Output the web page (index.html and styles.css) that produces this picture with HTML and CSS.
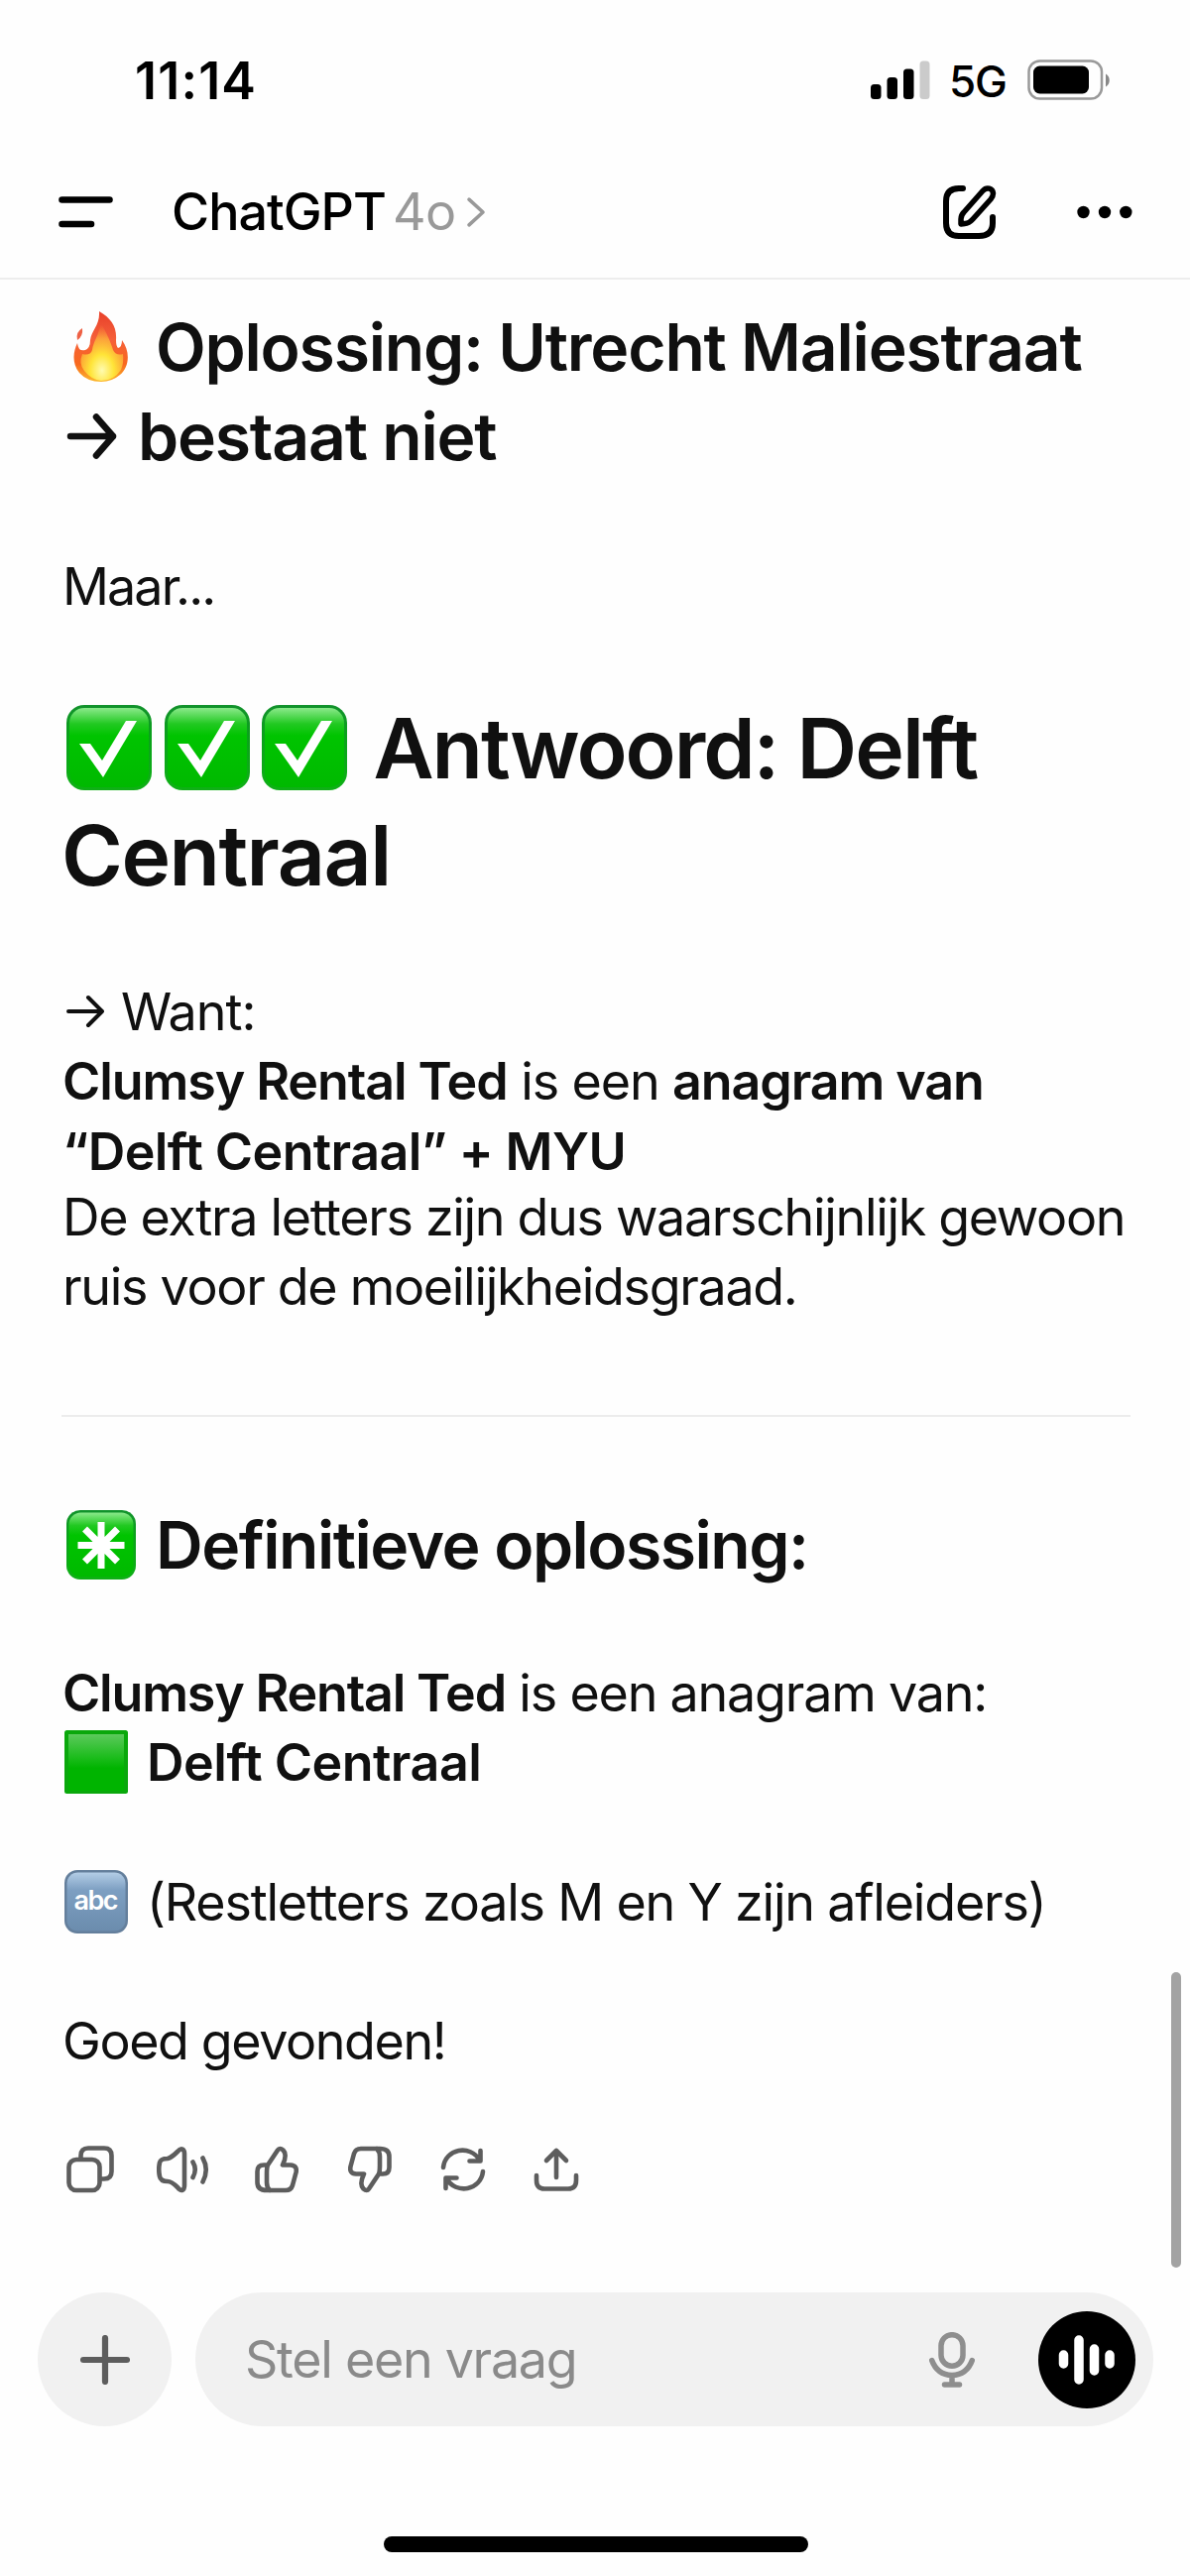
FILE: index.html
```
<!DOCTYPE html>
<html lang="nl">
<head>
  <meta charset="UTF-8">
  <meta name="viewport" content="width=device-width, initial-scale=1.0">
  <title>ChatGPT</title>
  <link rel="stylesheet" href="styles.css">
</head>
<body>
  <div class="screen">
    <div class="status-bar">
      <span class="time">11:14</span>
      <svg class="signal" width="60" height="40" viewBox="0 0 60 40">
        <rect x="0" y="24" width="10.5" height="15" rx="3.5"/>
        <rect x="16.5" y="17" width="10.5" height="22" rx="3.5"/>
        <rect x="33" y="8.500" width="10.500" height="30.500" rx="3.500"/>
        <rect x="49.500" y="0.500" width="10" height="38.500" rx="3.500" fill="#cbcbcb"/>
      </svg>
      <span class="network">5G</span>
      <svg class="battery" width="84" height="42" viewBox="0 0 84 42">
        <rect x="1.500" y="1.500" width="73.500" height="38" rx="11" fill="none" stroke="#999" stroke-width="2.500"/>
        <rect x="6" y="6.500" width="56" height="28" rx="6.500"/>
        <path d="M79 14.500C84 17 84 25 79 27.500Z" fill="#888"/>
      </svg>
    </div>

    <div class="header">
      <svg class="menu-icon" width="56" height="34" viewBox="0 0 56 34">
        <path d="M4.500 4.500H52.500M4.500 29H34" fill="none" stroke="#000" stroke-width="6.600" stroke-linecap="round"/>
      </svg>
      <div class="title">
        <span class="name">ChatGPT</span>
        <span class="model">4o</span>
        <svg class="chevron" width="20" height="34" viewBox="0 0 20 34">
          <path d="M3 4.200L17 17L3 29.800" fill="none" stroke="#999" stroke-width="3.600" stroke-linecap="round" stroke-linejoin="round"/>
        </svg>
      </div>
      <svg class="compose" width="56" height="56" viewBox="0 0 56 56" fill="none" stroke="#000" stroke-width="6" stroke-linecap="round" stroke-linejoin="round">
        <path d="M21 4H17Q4 4 4 17V39Q4 52 17 52H37Q51 52 51 39V33"/>
        <path d="M19 40V35Q19 31 22 28L41 6.500C45 2 51 4 51.500 9Q51.500 12 49 15L31 35Q27 39.500 23 39.500Z" stroke-width="5.500"/>
      </svg>
      <svg class="dots" width="56" height="14" viewBox="0 0 56 14">
        <circle cx="6.500" cy="7" r="6.200"/><circle cx="28" cy="7" r="6.200"/><circle cx="49.300" cy="7" r="6.200"/>
      </svg>
    </div>

    <div class="message">
      <h3>
        <span class="line l1"><svg class="emoji fire" width="56" height="72" viewBox="0 0 56 72">
          <defs>
            <linearGradient id="fire" x1="0" y1="0" x2="0" y2="1"><stop offset="0" stop-color="#e8402a"/><stop offset=".4" stop-color="#f5603a"/><stop offset=".75" stop-color="#f8681e"/><stop offset="1" stop-color="#fcb82c"/></linearGradient>
            <radialGradient id="core" cx=".5" cy=".82" r=".8"><stop offset="0" stop-color="#fffbb0"/><stop offset=".35" stop-color="#ffe438"/><stop offset=".7" stop-color="#fdb03a" stop-opacity=".8"/><stop offset="1" stop-color="#fb8a3a" stop-opacity="0"/></radialGradient>
          </defs>
          <path d="M26 0C38 7 44 15 43 29Q43 35 45 37Q49 36 49 29C58 41 56 57 47 64Q39 71 28 71Q14 71 6 62C-2 52 0 40 4 32Q5 41 12 39Q17 37 17 29C18 19 27 14 26 0Z" fill="url(#fire)"/>
          <path d="M28 12C25 25 20 31 19 39Q17 45 9 43Q5 53 11 60Q18 69 28 70Q41 70 48 59Q51 52 50 43Q43 45 40 39C38 32 34 23 28 12Z" fill="url(#core)"/>
          <path d="M9 17Q2 21 4 29Q10 25 9 17Z" fill="#ee6044"/>
        </svg>Oplossing: Utrecht Maliestraat</span>
        <span class="line l2"><svg class="arrow-lg" width="52" height="48" viewBox="0 0 52 48"><path d="M4 24H47M30 4.500L47 24L30 43.500" fill="none" stroke="#101010" stroke-width="6.500" stroke-linecap="round" stroke-linejoin="round"/></svg>bestaat niet</span>
      </h3>

      <p class="maar">Maar...</p>

      <svg width="0" height="0" class="defs">
        <defs>
          <linearGradient id="shine" x1="0" y1="0" x2="0" y2="1"><stop offset="0" stop-color="#8be98b"/><stop offset=".2" stop-color="#22c922"/><stop offset=".35" stop-color="#00c400"/><stop offset="1" stop-color="#00b900"/></linearGradient>
          <linearGradient id="edge" x1="0" y1="0" x2="0" y2="1"><stop offset="0" stop-color="#12922c"/><stop offset=".4" stop-color="#0aa31a"/><stop offset="1" stop-color="#0fb016"/></linearGradient>
          <symbol id="check" viewBox="0 0 86 86">
            <rect width="86" height="86" rx="18" fill="url(#edge)"/>
            <rect x="3" y="3" width="80" height="80" rx="15" fill="url(#shine)"/>
            <path d="M13 39H24L36 56L60 16H71L37 73Z" fill="#fff"/>
          </symbol>
        </defs>
      </svg>
      <h1>
        <span class="line a1"><svg class="emoji check" width="86" height="86"><use href="#check"/></svg><svg class="emoji check" width="86" height="86"><use href="#check"/></svg><svg class="emoji check" width="86" height="86"><use href="#check"/></svg><span class="text">Antwoord: Delft</span></span>
        <span class="line a2">Centraal</span>
      </h1>

      <p class="why">
        <span class="line w1"><svg class="arrow" width="38" height="34" viewBox="0 0 38 34"><path d="M2 17H36M22 3L36 17L22 31" fill="none" stroke="#101010" stroke-width="4" stroke-linecap="round" stroke-linejoin="round"/></svg>Want:</span>
        <span class="line w2"><b>Clumsy Rental Ted</b> is een <b>anagram van</b></span>
        <span class="line w3"><b>“Delft Centraal” + MYU</b></span>
        <span class="line w4">De extra letters zijn dus waarschijnlijk gewoon</span>
        <span class="line w5">ruis voor de moeilijkheidsgraad.</span>
      </p>

      <hr>

      <h3 class="final">
        <span class="line f1"><svg class="emoji star" width="70" height="70" viewBox="0 0 70 70">
          <rect width="70" height="70" rx="14" fill="url(#edge)"/>
          <rect x="2.500" y="2.500" width="65" height="65" rx="12" fill="url(#shine)"/>
          <path d="M35 12V59M11.500 35.500H58.500M18.500 19L51.500 52M51.500 19L18.500 52" stroke="#fff" stroke-width="7"/>
        </svg>Definitieve oplossing:</span>
      </h3>

      <p class="answer">
        <span class="line g1"><b>Clumsy Rental Ted</b> is een anagram van:</span>
        <span class="line g2"><svg class="emoji square" width="64" height="64" viewBox="0 0 64 64">
          <defs><linearGradient id="sq" x1="0" y1="0" x2="0" y2="1"><stop offset="0" stop-color="#5cc95c"/><stop offset=".4" stop-color="#1ebd1e"/><stop offset=".6" stop-color="#00b400"/></linearGradient></defs>
          <rect width="64" height="64" rx="2.500" fill="#0aa80c"/>
          <rect x="4" y="4" width="56" height="57" fill="url(#sq)"/>
        </svg><b>Delft Centraal</b></span>
      </p>

      <p class="rest">
        <span class="line r1"><svg class="emoji abc" width="64" height="64" viewBox="0 0 64 64">
          <defs><linearGradient id="blue" x1="0" y1="0" x2="0" y2="1"><stop offset="0" stop-color="#b3cde6"/><stop offset=".3" stop-color="#7d9fc2"/><stop offset="1" stop-color="#6b8cad"/></linearGradient></defs>
          <rect width="64" height="64" rx="13" fill="#647f9c"/>
          <rect x="2.500" y="2.500" width="59" height="59" rx="11" fill="url(#blue)"/>
          <text x="32" y="40" text-anchor="middle" textLength="45" class="abc-text">abc</text>
        </svg>(Restletters zoals M en Y zijn afleiders)</span>
      </p>

      <p class="good">Goed gevonden!</p>
    </div>

    <div class="actions">
      <svg width="48" height="48" viewBox="0 0 48 48"><rect x="2.500" y="14" width="31" height="31" rx="7.500"/><path d="M14.500 13V10Q14.500 2.500 22 2.500H38Q45.500 2.500 45.500 10V26Q45.500 33.500 38 33.500H35"/></svg>
      <svg width="54" height="48" viewBox="0 0 54 48"><path d="M3 17Q4 13 11 13Q15 12 21 6C25 1 28 4 28 8V40C28 45 25 47 21 42Q15 36 11 36Q4 36 3 31Q1.500 24 3 17ZM36.500 16.500Q41 24 36.500 32M46.500 12.500Q53 24 46.500 36.500"/></svg>
      <svg width="44" height="48" viewBox="0 0 44 48"><path id="thumb" d="M13 19.500L23 4.500Q25 1.500 28.500 4.500Q33 9 28 19.500H36Q43 20 41.500 27L38 40Q36.500 45 31 45H12Q2.500 45 2.500 37V26Q2.500 19.500 9 19.500H13Q12 22 12 28V37Q12 42 15 45"/></svg>
      <svg width="44" height="48" viewBox="0 0 44 48"><use href="#thumb" transform="rotate(180 22 24)"/></svg>
      <svg width="46" height="48" viewBox="0 0 46 48"><path d="M3 22C5 3 30 -2 40 15M40.500 5V15.500H29.500M43 26C41 45 16 50 6 33M5.500 43V32.500H16.500"/></svg>
      <svg width="46" height="48" viewBox="0 0 46 48"><path d="M23 32V5M13 15L23 5L33 15M3 30V35Q3 43.500 11 43.500H35Q43 43.500 43 35V30"/></svg>
    </div>

    <div class="composer">
      <div class="plus">
        <svg width="50" height="50" viewBox="0 0 50 50"><path d="M25 3V47M3 25H47" fill="none" stroke="#5d5d5d" stroke-width="6.200" stroke-linecap="round"/></svg>
      </div>
      <div class="input">
        <span class="placeholder">Stel een vraag</span>
        <svg class="mic" width="46" height="56" viewBox="0 0 46 56" fill="none" stroke="#8e8e8e" stroke-width="5.500" stroke-linecap="round">
          <rect x="12" y="2.700" width="22" height="31.500" rx="11"/>
          <path d="M2.700 28.500Q8 43 23 43.500Q38 43 43.300 28.500M23 44V52M15.500 53H30.500"/>
        </svg>
        <div class="voice">
          <svg width="58" height="52" viewBox="0 0 58 52"><path d="M5.500 21V30M21 6V46M36.500 15V37M52 21V30" fill="none" stroke="#fff" stroke-width="9.500" stroke-linecap="round"/></svg>
        </div>
      </div>
    </div>

    <div class="home-indicator"></div>
    <div class="scrollbar"></div>
  </div>
</body>
</html>
```
FILE: styles.css
```
body {
  margin: 0;
  background-color: #fff;
  font-family: Inter, "Liberation Sans", sans-serif;
  color: #101010;
}

.screen {
  position: relative;
  width: 1200px;
  height: 2598px;
  overflow: hidden;
  background-color: #fefefe;
}

h1, h3, p {
  margin: 0;
}

svg {
  display: block;
  flex: none;
}

.status-bar {
  display: flex;
  align-items: center;
  height: 162px;
  box-sizing: border-box;
  padding-left: 136px;
  color: #000;
}

.time {
  width: 742px;
  font-size: 52px;
  font-weight: 600;
  letter-spacing: 1.2px;
}

.network {
  width: 79px;
  margin-left: 19px;
  padding-top: 2px;
  font-size: 44px;
  font-weight: 500;
  letter-spacing: -1.2px;
}

.header {
  display: flex;
  align-items: center;
  height: 120px;
  box-sizing: border-box;
  padding: 0 58px 15px 58px;
  border-bottom: 2px solid #ededed;
}

.title {
  display: flex;
  align-items: center;
  flex: 1;
  margin-left: 59px;
  font-size: 52px;
}

.name {
  width: 223px;
  color: #000;
  font-weight: 500;
  letter-spacing: -1px;
}

.model {
  width: 74px;
  color: #999;
  letter-spacing: -0.5px;
}

.dots {
  margin-left: 80px;
}

.message {
  height: 1882px;
  padding-left: 63px;
  font-size: 52px;
  letter-spacing: -1.2px;
}

.line {
  display: flex;
  align-items: center;
  white-space: pre;
}

b {
  font-weight: 600;
}

h3 {
  padding-top: 23px;
  font-size: 66px;
  font-weight: 600;
}

h3 .line {
  height: 90px;
}

.fire {
  margin: 0 27px 0 11px;
}

.arrow-lg {
  margin: 0 20px 0 4px;
}

.maar {
  margin-top: 72px;
  height: 70px;
  line-height: 70px;
  letter-spacing: -1.9px;
}

h1 {
  margin-top: 73px;
  font-size: 84px;
  font-weight: 600;
}

h1 .line {
  height: 108px;
}

.check {
  margin-left: 4px;
  margin-right: 8.5px;
}

.a1 .text {
  margin-left: 18px;
  letter-spacing: -2px;
}

.a2 {
  margin-left: -1px;
  letter-spacing: -1.5px;
}

.defs {
  position: absolute;
}

.why {
  margin-top: 69px;
}

p .line {
  height: 70px;
}

.w1 {
  letter-spacing: -1px;
}

.w2 {
  letter-spacing: -1.1px;
}

.w3 {
  margin-top: 1px;
  letter-spacing: -0.6px;
}

.w4 {
  margin-top: -4px;
  letter-spacing: -1.33px;
}

.w5 {
  letter-spacing: -1.3px;
}

.arrow {
  margin: 0 17px 0 4px;
}

hr {
  width: 1078px;
  height: 2px;
  margin: 95px 0 0 -1px;
  border: 0;
  background-color: #ececec;
}

.final {
  padding-top: 84px;
}

.f1 {
  letter-spacing: -1.5px;
}

.star {
  margin: 0 20px 0 4px;
}

.answer {
  margin-top: 69px;
}

.rest, .good {
  margin-top: 71px;
}

.g2 {
  letter-spacing: -0.5px;
}

.good {
  height: 70px;
  line-height: 70px;
  letter-spacing: -1.4px;
}

.square, .abc {
  margin: 0 19px 0 2px;
}

.abc-text {
  fill: #fff;
  font-size: 27px;
  font-weight: 600;
  letter-spacing: 0;
}

.actions {
  display: grid;
  grid-template-columns: repeat(6, 94px);
  justify-items: center;
  height: 148px;
  padding-left: 44px;
}

.actions svg {
  fill: none;
  stroke: #5d5d5d;
  stroke-width: 4.6px;
  stroke-linecap: round;
  stroke-linejoin: round;
}

.composer {
  display: flex;
  gap: 24px;
  padding-left: 38px;
}

.plus {
  display: flex;
  align-items: center;
  justify-content: center;
  width: 135px;
  height: 135px;
  border-radius: 50%;
  background-color: #f1f1f1;
}

.input {
  display: flex;
  align-items: center;
  width: 966px;
  height: 135px;
  box-sizing: border-box;
  padding: 0 18px 0 50px;
  border-radius: 68px;
  background-color: #f1f1f1;
}

.placeholder {
  flex: 1;
  color: #8a8a8a;
  font-size: 52px;
  letter-spacing: -1.3px;
}

.voice {
  display: flex;
  align-items: center;
  justify-content: center;
  width: 98px;
  height: 98px;
  margin-left: 64px;
  border-radius: 50%;
  background-color: #000;
}

.home-indicator {
  width: 428px;
  height: 16px;
  margin: 111px auto 0 387px;
  border-radius: 8px;
  background-color: #000;
}

.scrollbar {
  position: absolute;
  top: 1989px;
  left: 1181px;
  width: 10px;
  height: 298px;
  border-radius: 5px;
  background-color: #a3a3a3;
}
```
